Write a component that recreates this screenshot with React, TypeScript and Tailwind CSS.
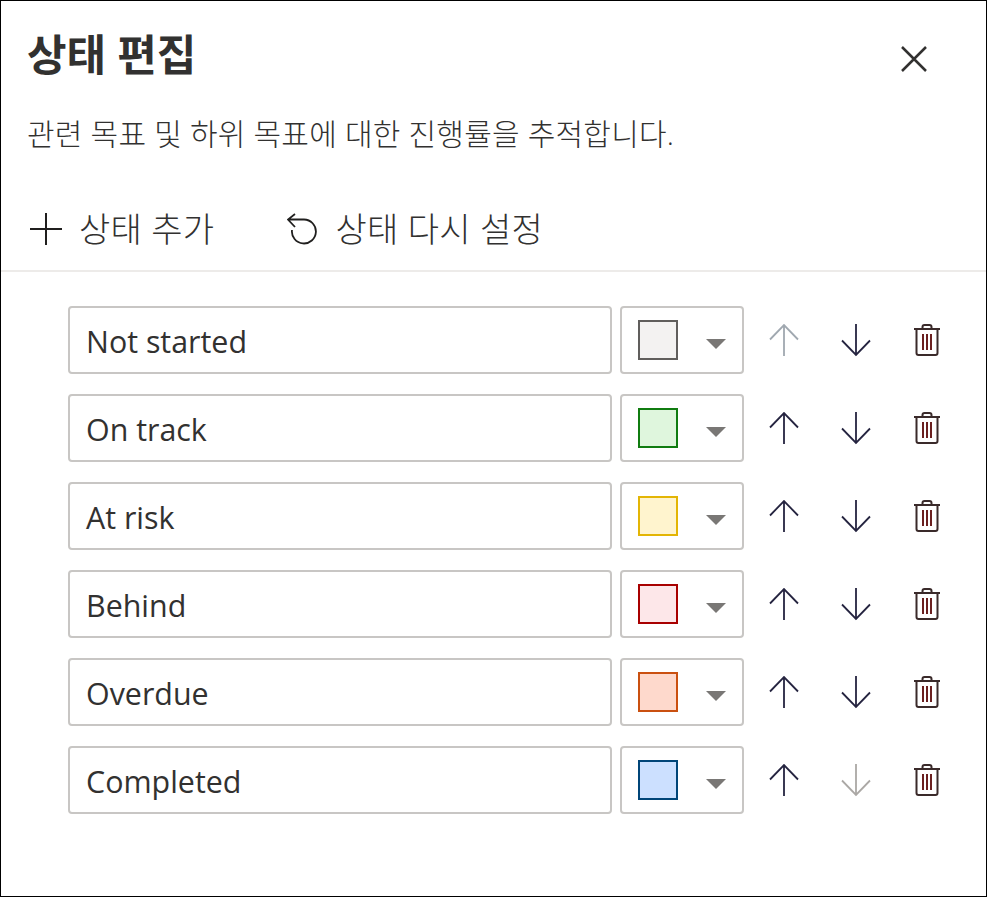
const font = "font-['Open_Sans','Noto_Sans_CJK_KR',sans-serif]";

const statuses = [
  { label: 'Not started', swatch: 'bg-[#f3f2f1] border-[#605e5c]', upOff: true },
  { label: 'On track', swatch: 'bg-[#dff6dd] border-[#107c10]' },
  { label: 'At risk', swatch: 'bg-[#fff4ce] border-[#e3b505]' },
  { label: 'Behind', swatch: 'bg-[#fde7e9] border-[#a80000]' },
  { label: 'Overdue', swatch: 'bg-[#fed9cc] border-[#ca5010]' },
  { label: 'Completed', swatch: 'bg-[#cce0ff] border-[#004578]', downOff: true },
];

const ArrowUp = ({ off }: { off?: boolean }) => (
  <svg width="30" height="34" viewBox="0 0 30 34" fill="none" stroke={off ? '#a0a8b0' : '#252440'} strokeWidth="1.8">
    <path d="M15 33V2M1 16.5L15 2l14 14.5" />
  </svg>
);

const ArrowDown = ({ off }: { off?: boolean }) => (
  <svg width="30" height="34" viewBox="0 0 30 34" fill="none" stroke={off ? '#aba8a5' : '#252440'} strokeWidth="1.8">
    <path d="M15 1v31M1 17.5L15 32l14-14.5" />
  </svg>
);

const Trash = () => (
  <svg width="26" height="32" viewBox="0 0 26 32" fill="none" stroke="#3a2a2a" strokeWidth="2">
    <path d="M0 5h26M2.5 5v24q0 2 2 2h17q2 0 2-2V5M8.5 5V3q0-2 2-2h5q2 0 2 2v2" />
    <path d="M9 10v16M13 10v16M17 10v16" stroke="#6b2020" />
  </svg>
);

export default function App() {
  return (
    <div className={`${font} w-[987px] h-[897px] bg-white border border-black text-[#323130] flex flex-col`}>
      <div className="flex justify-between pl-[26px] pr-[59px] pt-[28px]">
        <h1 className="text-[43px] leading-[52px] font-bold">상태 편집</h1>
        <svg className="mt-[17px]" width="26" height="26" viewBox="0 0 26 26" fill="none" stroke="#323130" strokeWidth="2.5">
          <path d="M1 1l24 24M25 1L1 25" />
        </svg>
      </div>
      <p className="pl-[26px] mt-[35px] text-[30px] leading-[36px] font-light tracking-[0.2px]">관련 목표 및 하위 목표에 대한 진행률을 추적합니다.</p>
      <div className="flex items-center pl-[29px] mt-[56px] h-[42px] text-[34px] font-light tracking-[0.3px]">
        <svg width="32" height="32" viewBox="0 0 32 32" fill="none" stroke="#201f1e" strokeWidth="2">
          <path d="M16 0v32M0 16h32" />
        </svg>
        <span className="ml-[17px]">상태 추가</span>
        <svg className="ml-[73px]" width="30" height="32" viewBox="0 0 30 32" fill="none" stroke="#201f1e" strokeWidth="1.8">
          <path d="M8 1L1 6.5 8 14M1 6.5h16a12 12 0 1 1-12 10.5" />
        </svg>
        <span className="ml-[18px]">상태 다시 설정</span>
      </div>
      <div className="mt-[20px] h-[2px] bg-[#edebe9]" />
      <div className="flex flex-col gap-[20px] pl-[67px] pt-[34px]">
        {statuses.map((s) => (
          <div key={s.label} className="flex items-center h-[68px]">
            <div className="w-[544px] h-full border-2 border-[#c8c6c4] rounded-[4px] flex items-center pl-[16px] pt-[4px] text-[30.4px]">
              {s.label}
            </div>
            <div className="ml-[8px] w-[124px] h-full border-2 border-[#c8c6c4] rounded-[4px] flex items-center pl-[16px]">
              <div className={`w-[40px] h-[40px] border-2 ${s.swatch}`} />
              <div className="ml-[28px] mt-[7px] w-0 h-0 border-x-[10px] border-x-transparent border-t-[10px] border-t-[#797775]" />
            </div>
            <div className="ml-[25px] flex items-center">
              <ArrowUp off={s.upOff} />
              <div className="ml-[42px]"><ArrowDown off={s.downOff} /></div>
              <div className="ml-[43px]"><Trash /></div>
            </div>
          </div>
        ))}
      </div>
    </div>
  );
}
